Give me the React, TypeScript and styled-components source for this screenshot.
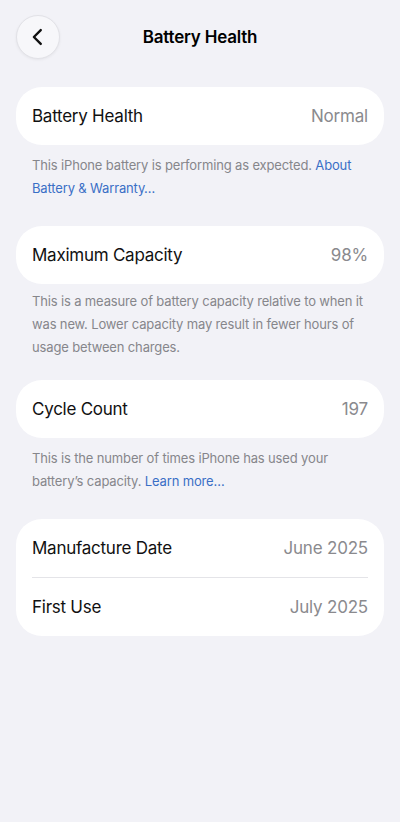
import React from 'react';
import styled, { createGlobalStyle } from 'styled-components';

const GlobalStyle = createGlobalStyle`
  html, body {
    margin: 0;
    padding: 0;
    background: #f2f2f7;
  }
  body {
    font-family: Inter, "Noto Sans", "Liberation Sans", sans-serif;
    -webkit-font-smoothing: antialiased;
  }
`;

const Page = styled.div`
  width: 400px;
  min-height: 822px;
  box-sizing: border-box;
  padding: 15px 16px 0;
  background: #f2f2f7;
`;

const Header = styled.header`
  display: grid;
  grid-template-columns: 44px 1fr 44px;
  align-items: center;
  height: 44px;
  margin-bottom: 28px;
`;

const BackButton = styled.button`
  width: 44px;
  height: 44px;
  border-radius: 50%;
  border: 1px solid #e2e2e7;
  background: #f7f7fa;
  box-shadow: 0 1px 3px rgba(0, 0, 0, 0.06);
  display: flex;
  align-items: center;
  justify-content: center;
  padding: 0;
`;

const Title = styled.h1`
  margin: 0;
  text-align: center;
  font-size: 17px;
  font-weight: 600;
  color: #000;
  letter-spacing: -0.2px;
`;

const Card = styled.div`
  background: #fff;
  border-radius: 26px;
  padding: 0 16px;
`;

const Row = styled.div<{ $divider?: boolean }>`
  display: flex;
  align-items: center;
  justify-content: space-between;
  height: 58px;
  border-bottom: ${(p) => (p.$divider ? '1px solid #e4e4e8' : 'none')};
`;

const Label = styled.span`
  font-size: 17px;
  color: #111;
  letter-spacing: -0.25px;
`;

const Value = styled.span`
  font-size: 17px;
  color: #8a8a8e;
  letter-spacing: -0.2px;
`;

const Footer = styled.p<{ $top?: number; $bottom?: number }>`
  margin: ${(p) => p.$top ?? 9}px 0 ${(p) => p.$bottom ?? 26}px;
  padding: 0 16px;
  font-size: 13px;
  line-height: 23px;
  letter-spacing: -0.15px;
  color: #86868b;
`;

const Link = styled.a`
  color: #3a6fc6;
  text-decoration: none;
`;

const Chevron = () => (
  <svg width="22" height="22" viewBox="0 0 24 24" fill="none">
    <path d="M15 4.5 7.5 12l7.5 7.5" stroke="#111" strokeWidth="2.6" strokeLinecap="round" strokeLinejoin="round" />
  </svg>
);

export default function App() {
  return (
    <>
      <GlobalStyle />
      <Page>
        <Header>
          <BackButton aria-label="Back">
            <Chevron />
          </BackButton>
          <Title>Battery Health</Title>
          <span />
        </Header>

        <Card>
          <Row>
            <Label>Battery Health</Label>
            <Value>Normal</Value>
          </Row>
        </Card>
        <Footer>
          This iPhone battery is performing as expected. <Link>About Battery &amp; Warranty…</Link>
        </Footer>

        <Card>
          <Row>
            <Label>Maximum Capacity</Label>
            <Value>98%</Value>
          </Row>
        </Card>
        <Footer $top={6} $bottom={21}>
          This is a measure of battery capacity relative to when it was new. Lower capacity may result in fewer hours of usage between charges.
        </Footer>

        <Card>
          <Row>
            <Label>Cycle Count</Label>
            <Value>197</Value>
          </Row>
        </Card>
        <Footer>
          This is the number of times iPhone has used your battery’s capacity. <Link>Learn more…</Link>
        </Footer>

        <Card>
          <Row $divider>
            <Label>Manufacture Date</Label>
            <Value>June 2025</Value>
          </Row>
          <Row>
            <Label>First Use</Label>
            <Value>July 2025</Value>
          </Row>
        </Card>
      </Page>
    </>
  );
}
